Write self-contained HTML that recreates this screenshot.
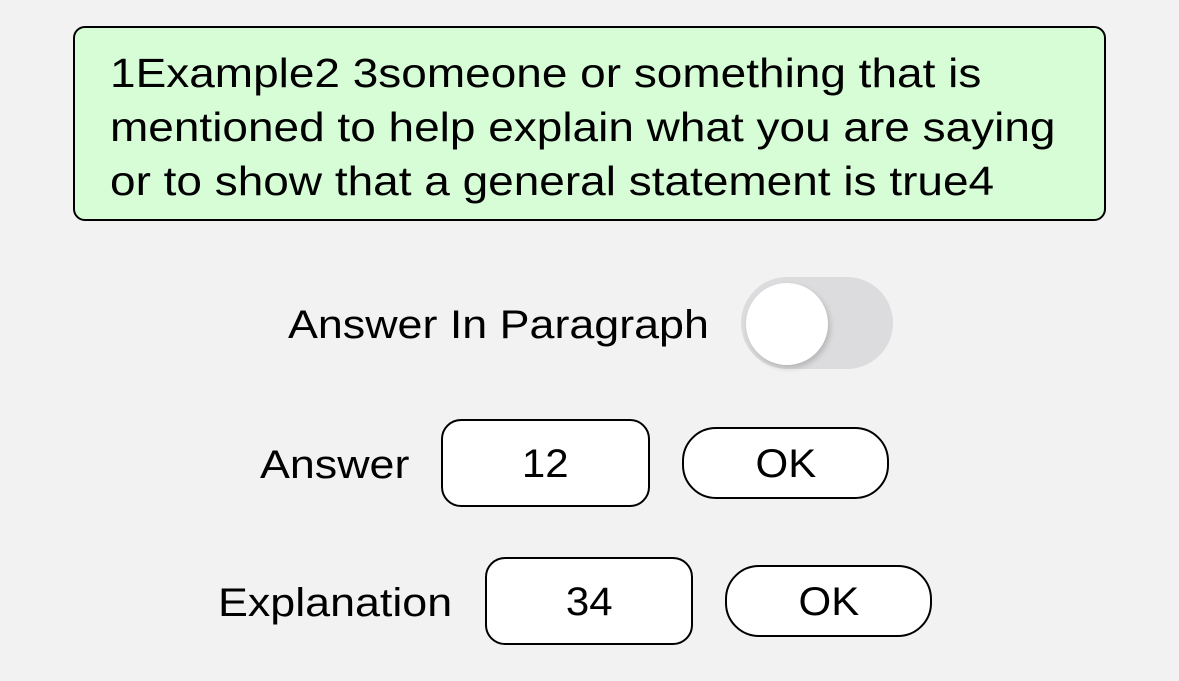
<!DOCTYPE html>
<html><head><style>
html,body{margin:0;padding:0;width:1179px;height:681px;background:#f2f2f2;overflow:hidden;font-family:"Liberation Sans",sans-serif;color:#000}
.a{position:absolute;white-space:nowrap}
.s{transform:scaleX(1.12);transform-origin:left center}
.box{position:absolute;box-sizing:border-box;border:2px solid #000;background:#fff;text-align:center;font-size:40px}
.box span{display:inline-block;transform:scaleX(1.05)}
</style></head><body>
<div class="a" style="left:73px;top:26px;width:1033px;height:195px;box-sizing:border-box;border:2px solid #000;border-radius:12px;background:#d7fdd7"></div>
<div class="a" style="left:110px;top:46px;font-size:40.5px;line-height:54px;transform:scaleX(1.135);transform-origin:left center">1Example2 3someone or something that is<br>mentioned to help explain what you are saying<br>or to show that a general statement is true4</div>
<div class="a s" style="left:288px;top:300px;font-size:40px;line-height:50px">Answer In Paragraph</div>
<div class="a" style="left:741px;top:277px;width:152px;height:92px;border-radius:46px;background:#dcdcde"></div>
<div class="a" style="left:746px;top:283px;width:82px;height:82px;border-radius:50%;background:#fff;box-shadow:2px 3px 6px rgba(0,0,0,0.18)"></div>
<div class="a s" style="left:260px;top:440px;font-size:40px;line-height:50px">Answer</div>
<div class="box" style="left:441px;top:419px;width:209px;height:88px;border-radius:20px;line-height:86px"><span>12</span></div>
<div class="box" style="left:682px;top:427px;width:207px;height:72px;border-radius:34px;line-height:70px"><span>OK</span></div>
<div class="a s" style="left:218px;top:578px;font-size:40px;line-height:50px">Explanation</div>
<div class="box" style="left:485px;top:557px;width:208px;height:88px;border-radius:20px;line-height:86px"><span>34</span></div>
<div class="box" style="left:725px;top:565px;width:207px;height:72px;border-radius:34px;line-height:70px"><span>OK</span></div>
</body></html>
